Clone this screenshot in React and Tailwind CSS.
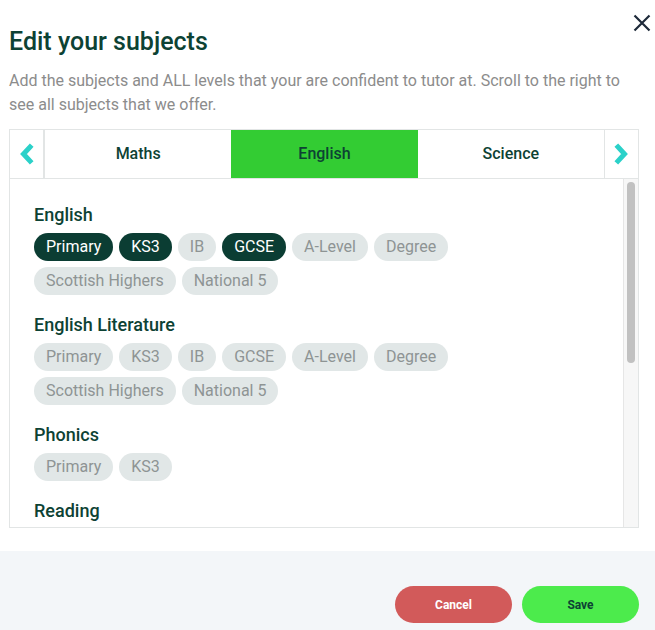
import { useState } from 'react';

const subjects = [
  {
    name: 'English',
    levels: ['Primary', 'KS3', 'IB', 'GCSE', 'A-Level', 'Degree', 'Scottish Highers', 'National 5'],
    selected: ['Primary', 'KS3', 'GCSE'],
  },
  {
    name: 'English Literature',
    levels: ['Primary', 'KS3', 'IB', 'GCSE', 'A-Level', 'Degree', 'Scottish Highers', 'National 5'],
    selected: [],
  },
  {
    name: 'Phonics',
    levels: ['Primary', 'KS3'],
    selected: [],
  },
  {
    name: 'Reading',
    levels: [],
    selected: [],
  },
];

const tabs = ['Maths', 'English', 'Science'];

function Chevron({ dir }) {
  return (
    <svg width="16" height="22" viewBox="0 0 16 22" fill="none">
      <path
        d={dir === 'left' ? 'M11 4 L4.5 11 L11 18' : 'M5 4 L11.5 11 L5 18'}
        stroke="#2bd1c9"
        strokeWidth="5"
        strokeLinecap="square"
        strokeLinejoin="miter"
      />
    </svg>
  );
}

export default function App() {
  const [activeTab, setActiveTab] = useState('English');

  return (
    <div
      className="w-[655px] h-[630px] bg-white flex flex-col relative overflow-hidden"
      style={{ fontFamily: 'Roboto, "Liberation Sans", sans-serif' }}
    >
      {/* Close */}
      <button className="absolute top-[13px] right-[3px] w-[20px] h-[20px] flex items-center justify-center">
        <svg width="18" height="18" viewBox="0 0 18 18">
          <path d="M1.5 1.5 L16.5 16.5 M16.5 1.5 L1.5 16.5" stroke="#1e2a3a" strokeWidth="2.2" />
        </svg>
      </button>

      {/* Header */}
      <div className="px-[9px] pt-[26px]">
        <h1 className="text-[25px] leading-[32px] font-medium text-[#0d4234]">Edit your subjects</h1>
        <p className="mt-[11px] text-[16px] leading-[24px] text-[#8c8c8c] pr-[20px]">
          Add the subjects and ALL levels that your are confident to tutor at. Scroll to the right to see all subjects that we offer.
        </p>
      </div>

      {/* Subjects box */}
      <div className="mx-[9px] mt-[12px] w-[630px] border border-[#e2e5e5]">
        {/* Tabs */}
        <div className="flex h-[49px] border-b border-[#e2e5e5]">
          <button className="w-[35px] flex items-center justify-center border-r-2 border-[#e2e5e5]">
            <Chevron dir="left" />
          </button>
          {tabs.map((tab) => (
            <button
              key={tab}
              onClick={() => setActiveTab(tab)}
              className={`flex-1 flex items-center justify-center text-[16px] font-medium text-[#0d4234] ${
                activeTab === tab ? 'bg-[#33cc33]' : 'bg-white'
              }`}
            >
              {tab}
            </button>
          ))}
          <button className="w-[34px] flex items-center justify-center border-l border-[#e2e5e5]">
            <Chevron dir="right" />
          </button>
        </div>

        {/* Content + scrollbar */}
        <div className="flex h-[348px]">
          <div className="flex-1 overflow-hidden pl-[24px] pt-[24px]">
            {subjects.map((s) => (
              <div key={s.name} className="mb-[18px]">
                <h3 className="text-[18px] leading-[24px] font-medium text-[#0d4234]">{s.name}</h3>
                {s.levels.length > 0 && (
                  <div className="mt-[6px] flex flex-wrap gap-[6px] w-[440px]">
                    {s.levels.map((lvl) => {
                      const on = s.selected.includes(lvl);
                      return (
                        <span
                          key={lvl}
                          className={`h-[28px] px-[12px] rounded-full flex items-center text-[16px] ${
                            on ? 'bg-[#0b3d33] text-white' : 'bg-[#e1e7e7] text-[#8e9494]'
                          }`}
                        >
                          {lvl}
                        </span>
                      );
                    })}
                  </div>
                )}
              </div>
            ))}
          </div>
          {/* Scrollbar */}
          <div className="w-[15px] bg-[#f7f7f7] border-l border-[#e6e6e6] pt-[3px] flex justify-center">
            <div className="w-[8px] h-[181px] rounded-full bg-[#c1c1c1]" />
          </div>
        </div>
      </div>

      {/* Footer */}
      <div className="mt-auto h-[79px] bg-[#f3f6f9] flex items-start justify-end gap-[10px] pr-[16px] pt-[35px]">
        <button className="w-[117px] h-[37px] rounded-full bg-[#d25a5a] text-white text-[12px] font-bold">
          Cancel
        </button>
        <button className="w-[117px] h-[37px] rounded-full bg-[#4ceb4c] text-[#0d4234] text-[12px] font-bold">
          Save
        </button>
      </div>
    </div>
  );
}
